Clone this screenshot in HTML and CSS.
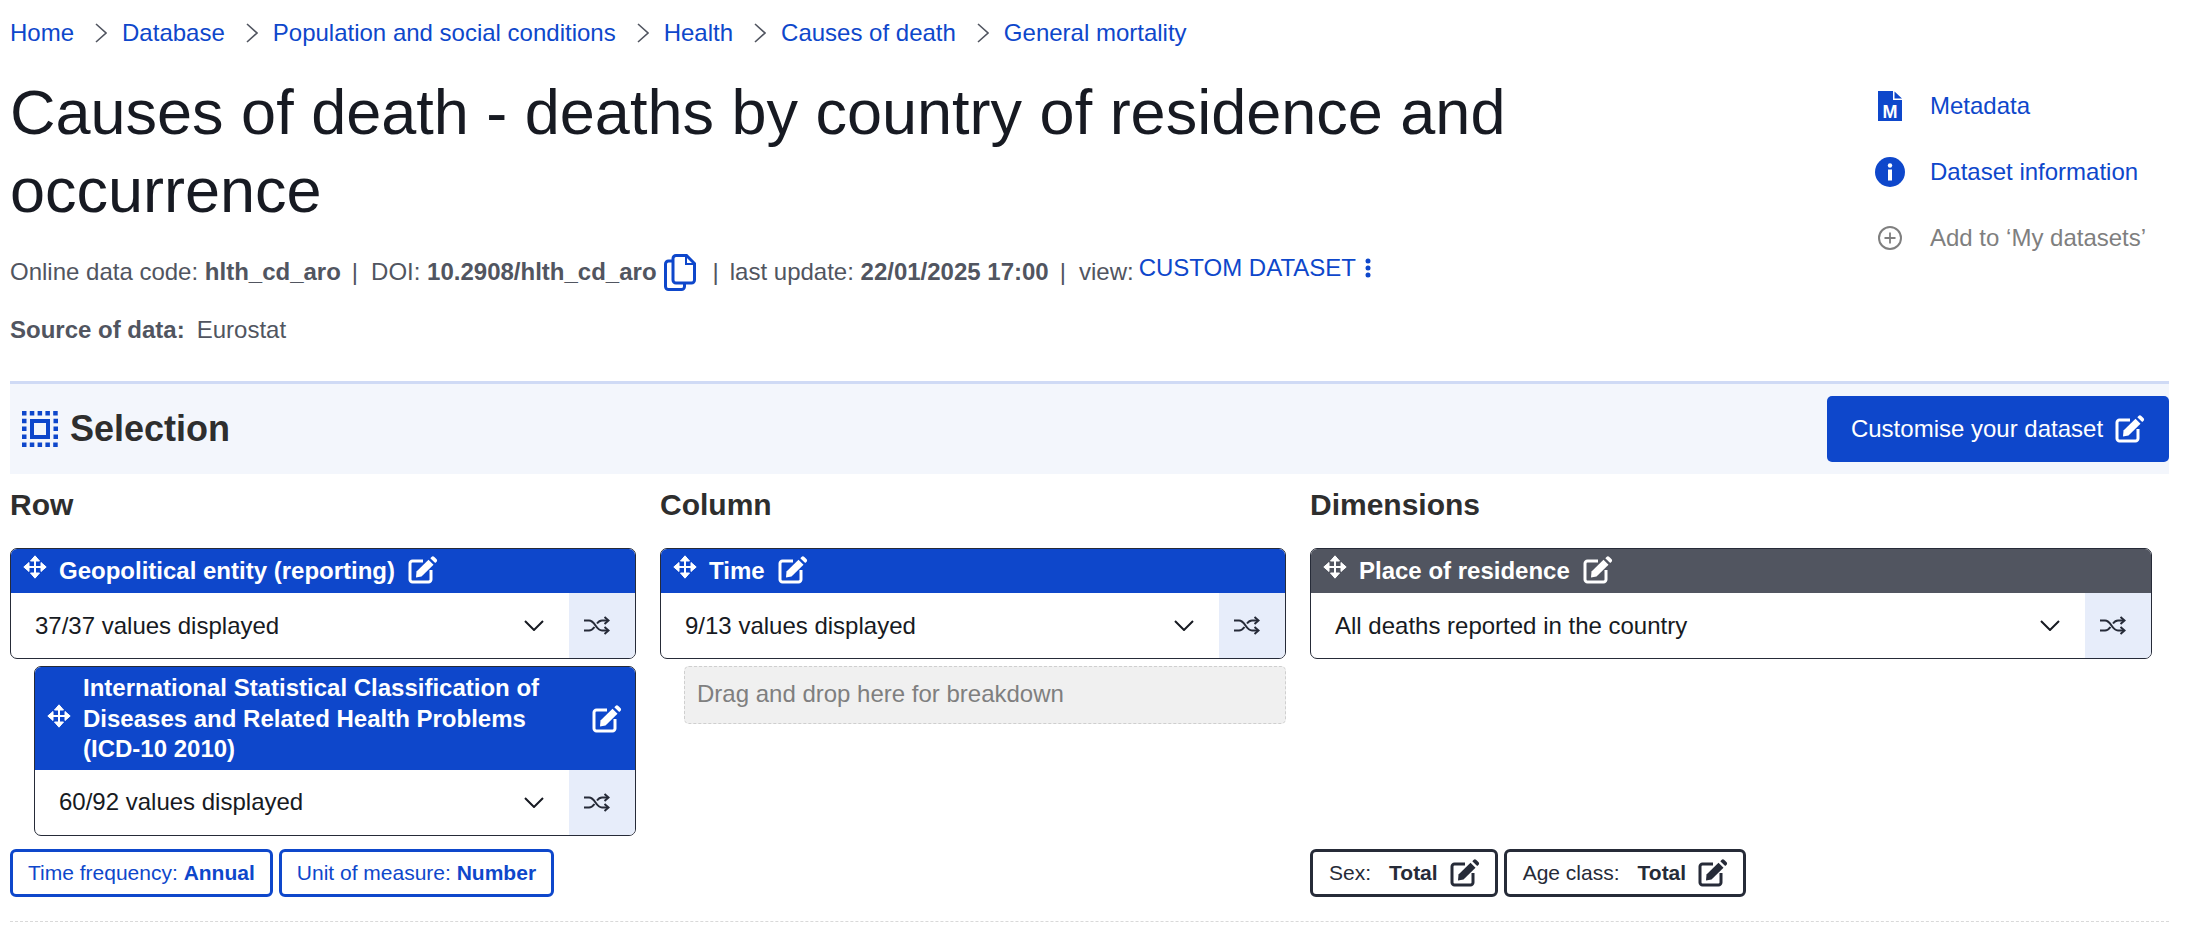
FILE: index.html
```html
<!DOCTYPE html>
<html lang="en">
<head>
<meta charset="utf-8">
<title>Causes of death - deaths by country of residence and occurrence</title>
<link rel="stylesheet" href="styles.css">
</head>
<body>
<svg class="defs" width="0" height="0" aria-hidden="true">
  <symbol id="i-edit" viewBox="0 0 30 28">
    <path d="M15 5H4.500a2.500 2.500 0 0 0-2.500 2.500v16A2.500 2.500 0 0 0 4.500 26h16a2.500 2.500 0 0 0 2.500-2.500V14" fill="none" stroke="currentColor" stroke-width="3"/>
    <path d="M8.500 15.500L20.500 3.800l5 5-12 11.700-5.500 1z" fill="currentColor"/>
    <path d="M22.300 2.200l1.200-1.200a2 2 0 0 1 2.800 0l2.100 2.100a2 2 0 0 1 0 2.800L27.200 7.100z" fill="currentColor"/>
  </symbol>
  <symbol id="i-move" viewBox="0 0 24 24">
    <path d="M12 3v18M3 12h18" fill="none" stroke="currentColor" stroke-width="2"/>
    <path d="M7.500 6L12 0.800 16.500 6zM7.500 18L12 23.200 16.500 18zM6 7.500L0.800 12 6 16.500zM18 7.500L23.200 12 18 16.500z" fill="currentColor" stroke="currentColor" stroke-width="1" stroke-linejoin="round"/>
  </symbol>
  <symbol id="i-shuffle" viewBox="0 0 26 19">
    <path d="M0 4.500h5c3 0 4.500 2 6.500 5s3.500 5 6.500 5h6M0 14.500h5c2.500 0 4-1.500 5.500-3.500M13 7.500c1.500-2 3-3 5-3h6" fill="none" stroke="currentColor" stroke-width="2"/>
    <path d="M20.500 1l4 3.500-4 3.500M20.500 11l4 3.500-4 3.500" fill="none" stroke="currentColor" stroke-width="2"/>
  </symbol>
  <symbol id="i-chevron" viewBox="0 0 20 11">
    <path d="M1 1l9 9 9-9" fill="none" stroke="currentColor" stroke-width="2"/>
  </symbol>
  <symbol id="i-crumb" viewBox="0 0 12 20">
    <path d="M1 1l10 9-10 9" fill="none" stroke="currentColor" stroke-width="1.600"/>
  </symbol>
</svg>

<nav class="breadcrumb">
  <a class="crumb" href="#">Home</a>
  <svg class="crumb-sep"><use href="#i-crumb"/></svg>
  <a class="crumb" href="#">Database</a>
  <svg class="crumb-sep"><use href="#i-crumb"/></svg>
  <a class="crumb" href="#">Population and social conditions</a>
  <svg class="crumb-sep"><use href="#i-crumb"/></svg>
  <a class="crumb" href="#">Health</a>
  <svg class="crumb-sep"><use href="#i-crumb"/></svg>
  <a class="crumb" href="#">Causes of death</a>
  <svg class="crumb-sep"><use href="#i-crumb"/></svg>
  <a class="crumb" href="#">General mortality</a>
</nav>

<header class="head">
  <div class="head-main">
    <h1 class="title">Causes of death - deaths by country of residence and occurrence</h1>
    <div class="meta">
      <span>Online data code:&nbsp;<b>hlth_cd_aro</b></span>
      <span class="pipe">|</span>
      <span>DOI:&nbsp;<b>10.2908/hlth_cd_aro</b></span>
      <svg class="copy" viewBox="0 0 32 37">
        <path d="M9 7H4.500A3 3 0 0 0 1.500 10v22.500a3 3 0 0 0 3 3h13a3 3 0 0 0 3-3V30" fill="none" stroke="currentColor" stroke-width="3"/>
        <path d="M12 1.500h10.500l8 8V26a3 3 0 0 1-3 3H12a3 3 0 0 1-3-3V4.500a3 3 0 0 1 3-3z" fill="none" stroke="currentColor" stroke-width="3"/>
        <path d="M22 2v8h8" fill="none" stroke="currentColor" stroke-width="2"/>
      </svg>
      <span class="pipe pipe-wide">|</span>
      <span>last update:&nbsp;<b>22/01/2025 17:00</b></span>
      <span class="pipe">|</span>
      <span>view:</span>
      <a class="view-link" href="#">CUSTOM DATASET</a>
      <svg class="dots" viewBox="0 0 6 20">
        <circle cx="3" cy="3" r="2.500" fill="currentColor"/>
        <circle cx="3" cy="10" r="2.500" fill="currentColor"/>
        <circle cx="3" cy="17" r="2.500" fill="currentColor"/>
      </svg>
    </div>
    <p class="source"><b class="source-label">Source of data:</b>Eurostat</p>
  </div>
  <aside class="actions">
    <a class="action" href="#">
      <span class="action-icon">
        <svg class="icon-meta" viewBox="0 0 24 30">
          <path d="M0 0h15v9h9v21H0z" fill="currentColor"/>
          <path d="M16.500 0.500L24 7.500h-7.500z" fill="currentColor"/>
          <text class="icon-meta-letter" x="12" y="27" text-anchor="middle">M</text>
        </svg>
      </span>
      Metadata
    </a>
    <a class="action" href="#">
      <span class="action-icon">
        <svg class="icon-info" viewBox="0 0 30 30">
          <circle cx="15" cy="15" r="15" fill="currentColor"/>
          <circle cx="15" cy="8.500" r="2.200" fill="#fff"/>
          <rect x="13" y="12.500" width="4" height="11" fill="#fff"/>
        </svg>
      </span>
      Dataset information
    </a>
    <a class="action action-off" href="#">
      <span class="action-icon">
        <svg class="icon-add" viewBox="0 0 24 24">
          <circle cx="12" cy="12" r="11" fill="none" stroke="currentColor" stroke-width="2"/>
          <path d="M12 6.500v11M6.500 12h11" fill="none" stroke="currentColor" stroke-width="1.800"/>
        </svg>
      </span>
      Add to ‘My datasets’
    </a>
  </aside>
</header>

<section class="bar">
  <h2 class="bar-title">
    <svg class="icon-select" viewBox="0 0 36 36">
      <path d="M0 2.250H36M0 33.750H36M2.250 7.800V31M33.750 7.800V31" fill="none" stroke="currentColor" stroke-width="4.500" stroke-dasharray="4.500 3.300"/>
      <rect x="10" y="10" width="16" height="16" fill="none" stroke="currentColor" stroke-width="4"/>
    </svg>
    Selection
  </h2>
  <button class="btn-primary" type="button">Customise your dataset <svg class="edit"><use href="#i-edit"/></svg></button>
</section>

<section class="board">
  <div class="col">
    <h3 class="col-title">Row</h3>
    <div class="panel">
      <div class="panel-head">
        <svg class="move"><use href="#i-move"/></svg>
        <span class="panel-name">Geopolitical entity (reporting)</span>
        <svg class="edit"><use href="#i-edit"/></svg>
      </div>
      <div class="panel-body">
        <span class="panel-value">37/37 values displayed</span>
        <svg class="chevron"><use href="#i-chevron"/></svg>
        <span class="shuffle"><svg class="shuffle-icon"><use href="#i-shuffle"/></svg></span>
      </div>
    </div>
    <div class="panel panel-nested">
      <div class="panel-head panel-head-tall">
        <svg class="move move-mid"><use href="#i-move"/></svg>
        <span class="panel-name panel-name-fill">International Statistical Classification of Diseases and Related Health Problems (ICD-10 2010)</span>
        <svg class="edit"><use href="#i-edit"/></svg>
      </div>
      <div class="panel-body">
        <span class="panel-value">60/92 values displayed</span>
        <svg class="chevron"><use href="#i-chevron"/></svg>
        <span class="shuffle"><svg class="shuffle-icon"><use href="#i-shuffle"/></svg></span>
      </div>
    </div>
    <div class="chips">
      <a class="chip" href="#">Time frequency:&nbsp;<b>Annual</b></a>
      <a class="chip" href="#">Unit of measure:&nbsp;<b>Number</b></a>
    </div>
  </div>

  <div class="col">
    <h3 class="col-title">Column</h3>
    <div class="panel">
      <div class="panel-head">
        <svg class="move"><use href="#i-move"/></svg>
        <span class="panel-name">Time</span>
        <svg class="edit"><use href="#i-edit"/></svg>
      </div>
      <div class="panel-body">
        <span class="panel-value">9/13 values displayed</span>
        <svg class="chevron"><use href="#i-chevron"/></svg>
        <span class="shuffle"><svg class="shuffle-icon"><use href="#i-shuffle"/></svg></span>
      </div>
    </div>
    <div class="dropzone">Drag and drop here for breakdown</div>
  </div>

  <div class="col col-last">
    <h3 class="col-title">Dimensions</h3>
    <div class="panel">
      <div class="panel-head panel-head-grey">
        <svg class="move"><use href="#i-move"/></svg>
        <span class="panel-name">Place of residence</span>
        <svg class="edit"><use href="#i-edit"/></svg>
      </div>
      <div class="panel-body">
        <span class="panel-value">All deaths reported in the country</span>
        <svg class="chevron"><use href="#i-chevron"/></svg>
        <span class="shuffle"><svg class="shuffle-icon"><use href="#i-shuffle"/></svg></span>
      </div>
    </div>
    <div class="chips chips-end">
      <a class="chip chip-dark" href="#"><span>Sex:</span><b>Total</b><svg class="edit"><use href="#i-edit"/></svg></a>
      <a class="chip chip-dark" href="#"><span>Age class:</span><b>Total</b><svg class="edit"><use href="#i-edit"/></svg></a>
    </div>
  </div>
</section>
</body>
</html>
```

FILE: styles.css
```css
* { box-sizing: border-box; }

html, body { height: 100%; }

body {
  margin: 0;
  padding: 0 16px 0 10px;
  background: #fff;
  color: #171a22;
  font-family: "Liberation Sans", Arial, sans-serif;
  font-size: 24px;
  line-height: 34px;
  overflow: hidden;
}

a { color: #0e47cb; text-decoration: none; }

.defs { position: absolute; }

.breadcrumb {
  display: flex;
  align-items: center;
  height: 66px;
}

.crumb-sep {
  width: 12px;
  height: 20px;
  margin: 0 15px 0 21px;
  color: #515560;
}

.head { display: flex; }

.head-main { flex: 1; min-width: 0; }

.title {
  max-width: 1600px;
  margin: 7px 0 0;
  color: #171a22;
  font-size: 63px;
  font-weight: 400;
  line-height: 78px;
}

.meta {
  display: flex;
  align-items: center;
  height: 44px;
  margin-top: 21px;
  color: #515560;
}

.meta b { font-weight: 700; }

.pipe { margin: 0 13px 0 11px; }

.pipe-wide { margin: 0 11px 0 17px; }

.copy {
  width: 32px;
  height: 37px;
  margin-left: 7px;
  color: #0e47cb;
}

.view-link {
  position: relative;
  top: -4px;
  margin-left: 5px;
}

.dots {
  position: relative;
  top: -4px;
  width: 6px;
  height: 20px;
  margin-left: 9px;
  color: #0e47cb;
}

.source {
  margin: 19px 0 0;
  color: #515560;
}

.source-label { margin-right: 12px; }

.actions {
  flex: none;
  width: 294px;
  padding-top: 7px;
}

.action {
  display: flex;
  align-items: center;
  height: 66px;
}

.action-off { color: #7f7f7f; }

.action-icon {
  display: flex;
  justify-content: center;
  width: 30px;
  margin-right: 25px;
}

.icon-meta { width: 24px; height: 30px; color: #0e47cb; }

.icon-meta-letter {
  fill: #fff;
  font-family: "Liberation Sans", Arial, sans-serif;
  font-size: 18px;
  font-weight: 700;
}

.icon-info { width: 30px; height: 30px; color: #0e47cb; }

.icon-add { width: 24px; height: 24px; color: #7f7f7f; }

.bar {
  display: flex;
  align-items: center;
  justify-content: space-between;
  height: 93px;
  margin-top: 34px;
  padding-left: 12px;
  border-top: 3px solid #cfdaf5;
  background: #f3f6fc;
}

.bar-title {
  display: flex;
  align-items: center;
  gap: 12px;
  margin: 0;
  color: #2e2e2e;
  font-size: 36px;
  font-weight: 700;
  line-height: 42px;
}

.icon-select { width: 36px; height: 36px; color: #0e47cb; }

.btn-primary {
  display: flex;
  align-items: center;
  justify-content: center;
  gap: 12px;
  width: 342px;
  height: 66px;
  border: 0;
  border-radius: 5px;
  background: #0e47cb;
  color: #fff;
  font: inherit;
}

.edit { flex: none; width: 30px; height: 28px; }

.board {
  display: grid;
  grid-template-columns: 650px 650px 1fr;
  padding-bottom: 24px;
  border-bottom: 1px dashed #d9d9d9;
}

.col {
  display: flex;
  flex-direction: column;
  padding-right: 24px;
}

.col-last { padding-right: 17px; }

.col-title {
  margin: 13px 0 25px;
  color: #2e2e2e;
  font-size: 30px;
  font-weight: 700;
  line-height: 36px;
}

.panel {
  overflow: hidden;
  border: 1px solid #262b38;
  border-radius: 7px;
}

.panel-nested {
  margin: 7px 0 0 24px;
}

.panel-head {
  display: flex;
  align-items: center;
  gap: 12px;
  min-height: 44px;
  padding: 0 13px 2px 12px;
  background: #0e47cb;
  color: #fff;
  font-weight: 700;
  line-height: 31px;
}

.panel-head-tall {
  padding: 6px 13px 5px 12px;
  line-height: 30.600px;
}

.panel-head-grey { background: #515560; }

.panel-name { margin-right: 1px; }

.panel-name-fill { flex: 1; }

.move {
  flex: none;
  width: 24px;
  height: 24px;
  margin-bottom: 6px;
}

.move-mid { margin-bottom: 5px; }

.panel-body {
  display: flex;
  align-items: center;
  height: 65px;
  padding-left: 24px;
}

.panel-value { flex: 1; }

.chevron {
  width: 20px;
  height: 11px;
  margin-right: 25px;
  color: #171a22;
}

.shuffle {
  display: flex;
  align-items: center;
  justify-content: center;
  align-self: stretch;
  width: 66px;
  padding-right: 10px;
  background: #e7edfa;
}

.shuffle-icon { width: 26px; height: 19px; color: #262b38; }

.dropzone {
  height: 58px;
  margin: 7px 0 0 24px;
  padding: 0 12px;
  border: 1px dashed #cfcfcf;
  border-radius: 5px;
  background: #f0f0f0;
  color: #7f7f7f;
  line-height: 54px;
}

.chips {
  display: flex;
  gap: 6px;
  margin-top: 13px;
}

.chips-end { margin-top: auto; }

.chip {
  display: flex;
  align-items: center;
  height: 48px;
  padding: 0 15px;
  border: 3px solid #0e47cb;
  border-radius: 6px;
  font-size: 21px;
}

.chip-dark {
  gap: 18px;
  padding: 0 15px 0 16px;
  border-color: #262b38;
  color: #262b38;
}

.chip-dark .edit { margin-left: -6px; }
```
